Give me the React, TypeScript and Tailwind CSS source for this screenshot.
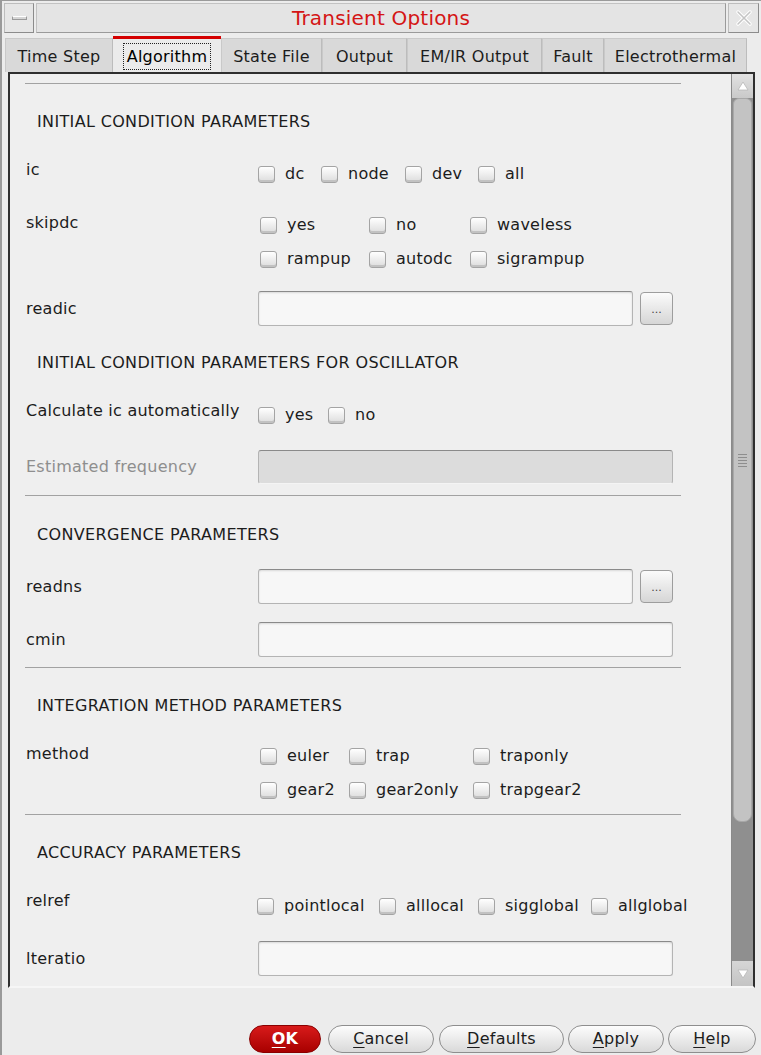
import React from 'react';

const Check = () => (
  <span className="inline-block w-[17px] h-[17px] shrink-0 rounded-[3px] border border-[#a4a4a4] bg-linear-to-b from-white to-[#dcdcdc] shadow-[inset_0_-2px_0_#c2c2c2]" />
);

const CheckItem = ({ label, className = '' }: { label: string; className?: string }) => (
  <div className={`flex items-center h-[34px] ${className}`}>
    <Check />
    <span className="ml-[10px] text-[#1c1c1c]">{label}</span>
  </div>
);

const Separator = ({ className = '' }: { className?: string }) => (
  <div className={`ml-[15px] w-[656px] h-px bg-[#a2a2a2] ${className}`} />
);

const Header = ({ text, className = '' }: { text: string; className?: string }) => (
  <div className={`h-[34px] flex items-center pl-[27px] pt-[2px] tracking-[0.35px] text-[#1c1c1c] ${className}`}>{text}</div>
);

const TextBox = ({ className = '', disabled = false }: { className?: string; disabled?: boolean }) => (
  <div
    className={`h-[35px] rounded-[3px] border border-[#b4b4b4] border-t-[#8a8a8a] ${
      disabled ? 'bg-[#dcdcdc] border-b-[#f4f4f4]' : 'bg-[#f7f7f7] shadow-[inset_0_1px_2px_rgba(0,0,0,0.12)]'
    } ${className}`}
  />
);

const BrowseButton = () => (
  <div className="ml-[7px] w-[33px] h-[33px] rounded-[4px] border border-[#9d9d9d] bg-linear-to-b from-[#fbfbfb] to-[#d6d6d6] flex items-end justify-center text-[11px] text-[#444] leading-none pb-[9px] tracking-normal">
    ...
  </div>
);

const tabs = [
  { name: 'Time Step', w: 'w-[108px]' },
  { name: 'Algorithm', w: 'w-[108px]', active: true },
  { name: 'State File', w: 'w-[101px]' },
  { name: 'Output', w: 'w-[85px]' },
  { name: 'EM/IR Output', w: 'w-[135px]' },
  { name: 'Fault', w: 'w-[62px]' },
  { name: 'Electrothermal', w: 'w-[143px]' },
];

const FooterButton = ({ label, className = '' }: { label: string; className?: string }) => (
  <div
    className={`h-[28px] rounded-full border border-[#8e8e8e] bg-linear-to-b from-[#fdfdfd] to-[#d9d9d9] flex items-center justify-center text-[#1c1c1c] ${className}`}
  >
    <span>
      <span className="underline underline-offset-[3px]">{label[0]}</span>
      {label.slice(1)}
    </span>
  </div>
);

export default function App() {
  return (
    <div className="w-[761px] h-[1055px] bg-[#ececec] border-l-2 border-t border-[#9a9a9a] overflow-hidden font-['DejaVu_Sans',sans-serif] text-[16px] leading-[20px] tracking-[0.25px] flex flex-col">
      {/* title bar */}
      <div className="h-[34px] flex items-center pl-[2px] pr-[2px] gap-[2px]">
        <div className="w-[30px] h-[30px] border border-[#bdbdbd] border-r-[#8c8c8c] border-b-[#8c8c8c] bg-[#e6e6e6] flex items-center justify-center">
          <div className="w-[15px] h-[4px] bg-[#d6d6d6] border border-[#9a9a9a] border-t-white" />
        </div>
        <div className="flex-1 h-[30px] border border-[#c2c2c2] border-b-[#9a9a9a] border-r-[#9a9a9a] bg-[#e4e4e4] flex items-center justify-center text-[20px] tracking-[0.2px] text-[#d41515]">
          Transient Options
        </div>
        <div className="w-[31px] h-[30px] border border-[#bdbdbd] border-r-[#8c8c8c] border-b-[#8c8c8c] bg-[#e6e6e6] flex items-center justify-center">
          <svg width="18" height="18" viewBox="0 0 18 18">
            <path d="M3 3 L15 15 M15 3 L3 15" stroke="#ffffff" strokeWidth="3.5" strokeLinecap="round" />
            <path d="M3 3 L15 15 M15 3 L3 15" stroke="#c4c4c4" strokeWidth="1.5" strokeLinecap="round" />
          </svg>
        </div>
      </div>

      {/* tabs */}
      <div className="h-[37px] flex items-end pl-[3px]">
        {tabs.map((t) =>
          t.active ? (
            <div key={t.name} className={`${t.w} h-[36px] border-t-[3px] border-[#d40000] bg-[#ebebeb] flex items-center justify-center pt-[2px]`}>
              <span className="border border-dotted border-[#222] px-[3px] h-[27px] flex items-center">{t.name}</span>
            </div>
          ) : (
            <div
              key={t.name}
              className={`${t.w} h-[34px] bg-[#d9d9d9] border-l border-r border-t border-[#c9c9c9] border-r-[#bcbcbc] flex items-center justify-center pt-[3px] text-[#1c1c1c]`}
            >
              {t.name}
            </div>
          )
        )}
      </div>

      {/* panel */}
      <div className="ml-[6px] w-[747px] h-[916px] border-t-2 border-l-2 border-r-2 border-b-2 border-[#2f2f2f] border-b-[#f6f6f6] flex bg-[#efefef]">
        <div className="w-[721px] h-full overflow-hidden text-[#1c1c1c]">
          <Separator className="mt-[9px]" />
          <Header text="INITIAL CONDITION PARAMETERS" className="mt-[20px]" />

          <div className="mt-[19px] flex pl-[16px]">
            <div className="w-[232px] pt-[3px]">ic</div>
            <div className="flex">
              <CheckItem label="dc" className="w-[63px]" />
              <CheckItem label="node" className="w-[84px]" />
              <CheckItem label="dev" className="w-[73px]" />
              <CheckItem label="all" />
            </div>
          </div>

          <div className="mt-[17px] flex pl-[16px]">
            <div className="w-[232px] pt-[5px]">skipdc</div>
            <div className="ml-[2px] grid grid-cols-[109px_101px_auto]">
              <CheckItem label="yes" />
              <CheckItem label="no" />
              <CheckItem label="waveless" />
              <CheckItem label="rampup" />
              <CheckItem label="autodc" />
              <CheckItem label="sigrampup" />
            </div>
          </div>

          <div className="mt-[15px] flex items-center pl-[16px]">
            <div className="w-[232px]">readic</div>
            <TextBox className="w-[375px]" />
            <BrowseButton />
          </div>

          <Header text="INITIAL CONDITION PARAMETERS FOR OSCILLATOR" className="mt-[19px]" />

          <div className="mt-[19px] flex pl-[16px]">
            <div className="w-[232px] pt-[3px]">Calculate ic automatically</div>
            <div className="flex">
              <CheckItem label="yes" className="w-[70px]" />
              <CheckItem label="no" />
            </div>
          </div>

          <div className="mt-[18px] flex items-center pl-[16px]">
            <div className="w-[232px] text-[#8e8e8e]">Estimated frequency</div>
            <TextBox className="w-[415px] !h-[34px]" disabled />
          </div>

          <Separator className="mt-[11px]" />
          <Header text="CONVERGENCE PARAMETERS" className="mt-[21px]" />

          <div className="mt-[18px] flex items-center pl-[16px]">
            <div className="w-[232px]">readns</div>
            <TextBox className="w-[375px]" />
            <BrowseButton />
          </div>

          <div className="mt-[18px] flex items-center pl-[16px]">
            <div className="w-[232px]">cmin</div>
            <TextBox className="w-[415px]" />
          </div>

          <Separator className="mt-[10px]" />
          <Header text="INTEGRATION METHOD PARAMETERS" className="mt-[20px]" />

          <div className="mt-[17px] flex pl-[16px]">
            <div className="w-[232px] pt-[5px]">method</div>
            <div className="ml-[2px] grid grid-cols-[89px_124px_auto]">
              <CheckItem label="euler" />
              <CheckItem label="trap" />
              <CheckItem label="traponly" />
              <CheckItem label="gear2" />
              <CheckItem label="gear2only" />
              <CheckItem label="trapgear2" />
            </div>
          </div>

          <Separator className="mt-[7px]" />
          <Header text="ACCURACY PARAMETERS" className="mt-[20px]" />

          <div className="mt-[20px] flex pl-[16px]">
            <div className="w-[232px] pt-[2px]">relref</div>
            <div className="flex -ml-[1px]">
              <CheckItem label="pointlocal" className="w-[122px]" />
              <CheckItem label="alllocal" className="w-[99px]" />
              <CheckItem label="sigglobal" className="w-[113px]" />
              <CheckItem label="allglobal" />
            </div>
          </div>

          <div className="mt-[18px] flex items-center pl-[16px]">
            <div className="w-[232px]">lteratio</div>
            <TextBox className="w-[415px]" />
          </div>
        </div>

        {/* scrollbar */}
        <div className="w-[22px] h-full border-l border-[#8a8a8a] flex flex-col bg-[#8f8f8f]">
          <div className="h-[24px] bg-linear-to-b from-[#e2e2e2] to-[#c9c9c9] flex items-center justify-center">
            <svg width="12" height="10" viewBox="0 0 12 10">
              <path d="M6 1 L11 9 L1 9 Z" fill="#ffffff" stroke="#b8b8b8" strokeWidth="0.8" />
            </svg>
          </div>
          <div className="h-[724px] mx-[1px] rounded-b-[8px] rounded-t-[6px] bg-[#c3c3c3] border border-[#a8a8a8] flex items-center justify-center">
            <div className="flex flex-col gap-[2px]">
              <div className="w-[9px] h-px bg-[#8e8e8e]" />
              <div className="w-[9px] h-px bg-[#8e8e8e]" />
              <div className="w-[9px] h-px bg-[#8e8e8e]" />
              <div className="w-[9px] h-px bg-[#8e8e8e]" />
              <div className="w-[9px] h-px bg-[#8e8e8e]" />
            </div>
          </div>
          <div className="flex-1" />
          <div className="h-[25px] bg-linear-to-b from-[#d6d6d6] to-[#c4c4c4] flex items-center justify-center">
            <svg width="12" height="10" viewBox="0 0 12 10">
              <path d="M1 1 L11 1 L6 9 Z" fill="#ffffff" stroke="#b8b8b8" strokeWidth="0.8" />
            </svg>
          </div>
        </div>
      </div>

      {/* footer buttons */}
      <div className="flex-1 flex items-end justify-end pr-[5px] pb-[2px]">
        <div className="w-[72px] h-[28px] rounded-full bg-linear-to-b from-[#d81a1a] to-[#a80000] border border-[#8a0000] flex items-center justify-center text-white font-bold">
          <span>
            <span className="underline underline-offset-[3px]">O</span>K
          </span>
        </div>
        <FooterButton label="Cancel" className="ml-[7px] w-[106px]" />
        <FooterButton label="Defaults" className="ml-[5px] w-[125px]" />
        <FooterButton label="Apply" className="ml-[4px] w-[96px]" />
        <FooterButton label="Help" className="ml-[4px] w-[88px]" />
      </div>
    </div>
  );
}
